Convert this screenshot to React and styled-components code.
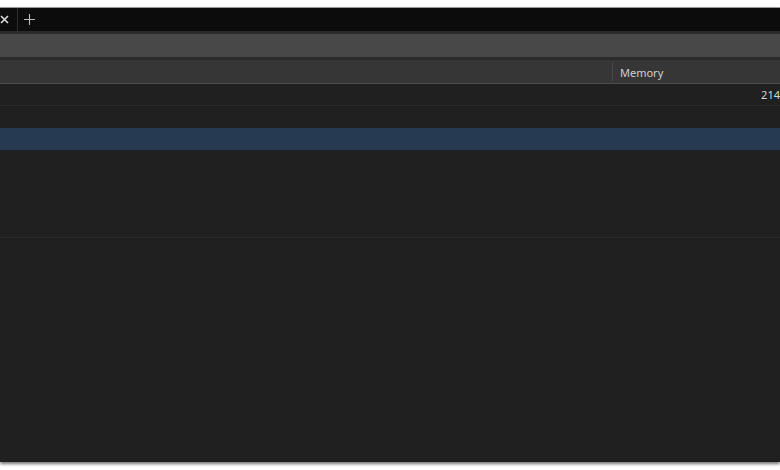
import React from "react";
import styled, { createGlobalStyle } from "styled-components";

const GlobalStyle = createGlobalStyle`
  html, body {
    margin: 0;
    padding: 0;
    background: #ffffff;
    overflow: hidden;
  }
  body {
    font-family: "Segoe UI", "Noto Sans", "Open Sans", sans-serif;
  }
`;

const rows = [
  { memory: "214" },
  { memory: "" },
  { memory: "", selected: true },
  { memory: "" },
  { memory: "" },
  { memory: "" },
  { memory: "", last: true },
];

const CloseIcon = () => (
  <svg width="9" height="9" viewBox="0 0 9 9">
    <path d="M1 1 L8 8 M8 1 L1 8" stroke="#dcdcdc" strokeWidth="1.6" />
  </svg>
);

const PlusIcon = () => (
  <svg width="11" height="11" viewBox="0 0 11 11">
    <path d="M5.5 0 V11 M0 5.5 H11" stroke="#bcbcbc" strokeWidth="1.1" />
  </svg>
);

const App = () => {
  return (
    <>
      <GlobalStyle />
      <Page>
        <Window>
          <TabBar>
            <CloseTab>
              <CloseIcon />
            </CloseTab>
            <TabDivider />
            <NewTab>
              <PlusIcon />
            </NewTab>
          </TabBar>
          <Spacer />
          <Toolbar />
          <Spacer />
          <Header>
            <HeaderCell grow />
            <HeaderCell width="168px" divider>
              Memory
            </HeaderCell>
          </Header>
          <Body>
            {rows.map((row, i) => (
              <Row key={i} selected={row.selected} line={i === 0 || row.last}>
                <Cell grow />
                <Cell width="168px" align="right">
                  {row.memory}
                </Cell>
              </Row>
            ))}
          </Body>
        </Window>
      </Page>
    </>
  );
};

const Page = styled.div`
  width: 780px;
  height: 470px;
  padding-top: 7px;
  box-sizing: border-box;
`;

const Window = styled.div`
  height: 455px;
  display: flex;
  flex-direction: column;
  background: #202020;
  border-top: 1px solid #9a9a9a;
  box-shadow: 0 2px 3px rgba(0, 0, 0, 0.55);
  box-sizing: border-box;
  overflow: hidden;
`;

const TabBar = styled.div`
  height: 23px;
  flex: none;
  display: flex;
  align-items: center;
  background: #0c0c0c;
`;

const CloseTab = styled.span`
  width: 17px;
  height: 23px;
  display: flex;
  align-items: center;
  padding-left: 0;
  box-sizing: border-box;
`;

const TabDivider = styled.div`
  width: 1px;
  height: 23px;
  background: #2e2e2e;
`;

const NewTab = styled.span`
  height: 23px;
  display: flex;
  align-items: center;
  margin-left: 6px;
`;

const Spacer = styled.div`
  height: 3px;
  flex: none;
  background: #2b2b2b;
`;

const Toolbar = styled.div`
  height: 23px;
  flex: none;
  background: #484848;
`;

const Header = styled.div`
  height: 23px;
  flex: none;
  display: flex;
  background: #363636;
  border-bottom: 1px solid #4e4e4e;
`;

const HeaderCell = styled.div`
  ${(p) => (p.grow ? "flex: 1;" : `width: ${p.width}; flex: none;`)}
  display: flex;
  align-items: center;
  padding-left: 7px;
  padding-top: 2px;
  box-sizing: border-box;
  font-size: 11px;
  color: #cfcfcf;
  border-left: ${(p) => (p.divider ? "1px solid #4a4a4a" : "none")};
  margin: ${(p) => (p.divider ? "2px 0" : "0")};
`;

const Body = styled.div`
  flex: 1;
  display: flex;
  flex-direction: column;
`;

const Row = styled.div`
  height: 22px;
  flex: none;
  display: flex;
  box-sizing: border-box;
  background: ${(p) => (p.selected ? "#263a52" : "#202020")};
  border-bottom: 1px solid ${(p) => (p.line ? "#2a2a2a" : "transparent")};
`;

const Cell = styled.div`
  ${(p) => (p.grow ? "flex: 1;" : `width: ${p.width}; flex: none;`)}
  display: flex;
  align-items: center;
  justify-content: ${(p) => (p.align === "right" ? "flex-end" : "flex-start")};
  font-size: 11px;
  color: #d6d6d6;
`;

export default App;
